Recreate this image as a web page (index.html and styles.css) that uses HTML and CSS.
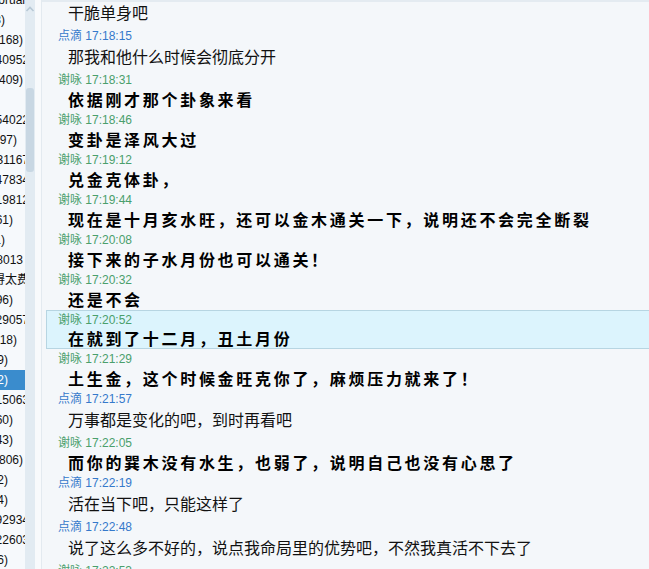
FILE: index.html
```html
<!DOCTYPE html>
<html lang="zh">
<head>
<meta charset="utf-8">
<title>聊天记录</title>
<link rel="stylesheet" href="styles.css">
</head>
<body>
<div class="app">
  <div class="side">
    <div class="list">
      <div class="row"><span class="cut">(xiaoruan</span></div>
      <div class="row"><span class="e5">(48)</span></div>
      <div class="row"><span class="e23">(95168)</span></div>
      <div class="row"><span class="cut">(340952</span></div>
      <div class="row"><span class="e23">(29409)</span></div>
      <div class="row"><span class="e23"></span></div>
      <div class="row"><span class="cut">(654022</span></div>
      <div class="row"><span class="e17">(3997)</span></div>
      <div class="row"><span class="cut">(831167</span></div>
      <div class="row"><span class="cut">(547834</span></div>
      <div class="row"><span class="cut">(219812</span></div>
      <div class="row"><span class="e13">(7261)</span></div>
      <div class="row"><span class="e5">(31)</span></div>
      <div class="row"><span class="e23">(58013</span></div>
      <div class="row"><span class="cut">觉得太费</span></div>
      <div class="row"><span class="e13">(596)</span></div>
      <div class="row"><span class="cut">(129057</span></div>
      <div class="row"><span class="e17">(3.18)</span></div>
      <div class="row"><span class="e8">(9)</span></div>
      <div class="row sel"><span class="e8">(2)</span></div>
      <div class="row"><span class="cut">(415063</span></div>
      <div class="row"><span class="e13">(560)</span></div>
      <div class="row"><span class="e13">(243)</span></div>
      <div class="row"><span class="e23">(37806)</span></div>
      <div class="row"><span class="e8">(2)</span></div>
      <div class="row"><span class="e8">(4)</span></div>
      <div class="row"><span class="cut">(892934</span></div>
      <div class="row"><span class="cut">(122603</span></div>
      <div class="row"><span class="e8">(6)</span></div>
    </div>
    <div class="scroll">
      <svg class="arrow" width="10" height="8" viewBox="0 0 10 8"><polyline points="1.5,6 5,2.5 8.5,6" fill="none" stroke="#b7c8d5" stroke-width="1.6"/></svg>
      <div class="thumb"></div>
    </div>
    <div class="gutter"></div>
  </div>
  <div class="chat">
    <div class="topbar"></div>
    <div class="msgs">
      <div class="msg">干脆单身吧</div>
      <div class="name blue">点滴 17:18:15</div>
      <div class="msg">那我和他什么时候会彻底分开</div>
      <div class="name green">谢咏 17:18:31</div>
      <div class="msg bold">依据刚才那个卦象来看</div>
      <div class="name green">谢咏 17:18:46</div>
      <div class="msg bold">变卦是泽风大过</div>
      <div class="name green">谢咏 17:19:12</div>
      <div class="msg bold">兑金克体卦，</div>
      <div class="name green">谢咏 17:19:44</div>
      <div class="msg bold">现在是十月亥水旺，还可以金木通关一下，说明还不会完全断裂</div>
      <div class="name green">谢咏 17:20:08</div>
      <div class="msg bold">接下来的子水月份也可以通关！</div>
      <div class="name green">谢咏 17:20:32</div>
      <div class="msg bold">还是不会</div>
      <div class="hl">
        <div class="name green">谢咏 17:20:52</div>
        <div class="msg bold">在就到了十二月，丑土月份</div>
      </div>
      <div class="name green">谢咏 17:21:29</div>
      <div class="msg bold">土生金，这个时候金旺克你了，麻烦压力就来了！</div>
      <div class="name blue">点滴 17:21:57</div>
      <div class="msg">万事都是变化的吧，到时再看吧</div>
      <div class="name green">谢咏 17:22:05</div>
      <div class="msg bold">而你的巽木没有水生，也弱了，说明自己也没有心思了</div>
      <div class="name blue">点滴 17:22:19</div>
      <div class="msg">活在当下吧，只能这样了</div>
      <div class="name blue">点滴 17:22:48</div>
      <div class="msg">说了这么多不好的，说点我命局里的优势吧，不然我真活不下去了</div>
      <div class="name green">谢咏 17:22:53</div>
    </div>
  </div>
</div>
</body>
</html>
```

FILE: styles.css
```css
html, body {
  margin: 0;
  padding: 0;
}
body {
  width: 649px;
  height: 569px;
  overflow: hidden;
  background: #f4f7fa;
  font-family: "Liberation Sans", "Noto Sans CJK SC", sans-serif;
}
.app {
  display: flex;
  height: 569px;
  overflow: hidden;
}
.side {
  display: flex;
  flex: 0 0 42px;
  height: 569px;
}
.list {
  width: 25px;
  overflow: hidden;
  background: #f6f9fc;
  margin-top: -10px;
  height: 579px;
}
.row {
  height: 20px;
  line-height: 20px;
  font-size: 12px;
  color: #111;
  display: flex;
  justify-content: flex-end;
  white-space: nowrap;
  overflow: hidden;
}
.row.sel {
  background: #3a8ccd;
  color: #fff;
}
.row span { flex: none; }
.e23 { margin-right: 2px; }
.e17 { margin-right: 8px; }
.e13 { margin-right: 12px; }
.e8 { margin-right: 17px; }
.e5 { margin-right: 20px; }
.cut { margin-right: -4px; }
.scroll {
  width: 10px;
  background: #e2ebf2;
  display: flex;
  flex-direction: column;
  align-items: center;
}
.arrow {
  display: block;
  margin-top: 5px;
}
.thumb {
  width: 8px;
  height: 84px;
  margin-top: 75px;
  background: #c8d7e3;
  border-radius: 3px;
}
.gutter {
  width: 6px;
  background: #f8fafc;
  border-right: 1px solid #e3eaf0;
}
.chat {
  flex: 1;
  display: flex;
  flex-direction: column;
  min-width: 0;
}
.topbar {
  height: 2px;
  background: #e4ebf1;
  flex: none;
}
.msgs {
  display: flex;
  flex-direction: column;
}
.name {
  height: 20px;
  line-height: 20px;
  font-size: 12px;
  padding-left: 16px;
  white-space: nowrap;
}
.blue { color: #3579cb; }
.green { color: #4a9f6c; }
.msg {
  height: 24px;
  line-height: 20px;
  font-size: 16px;
  padding-left: 26px;
  color: #111;
  white-space: nowrap;
  font-family: "Noto Sans CJK SC", sans-serif;
}
.msg.bold {
  height: 20px;
  line-height: 18px;
  font-weight: 700;
  letter-spacing: 2.7px;
  color: #000;
}
.hl {
  margin-left: 4px;
  background: #dcf4fd;
  border: 1px solid #b7d5e2;
  border-right: none;
  height: 37px;
}
.hl .name {
  padding-left: 11px;
  height: 19px;
  line-height: 19px;
}
.hl .msg {
  padding-left: 21px;
  height: 18px;
  line-height: 16px;
}
```
